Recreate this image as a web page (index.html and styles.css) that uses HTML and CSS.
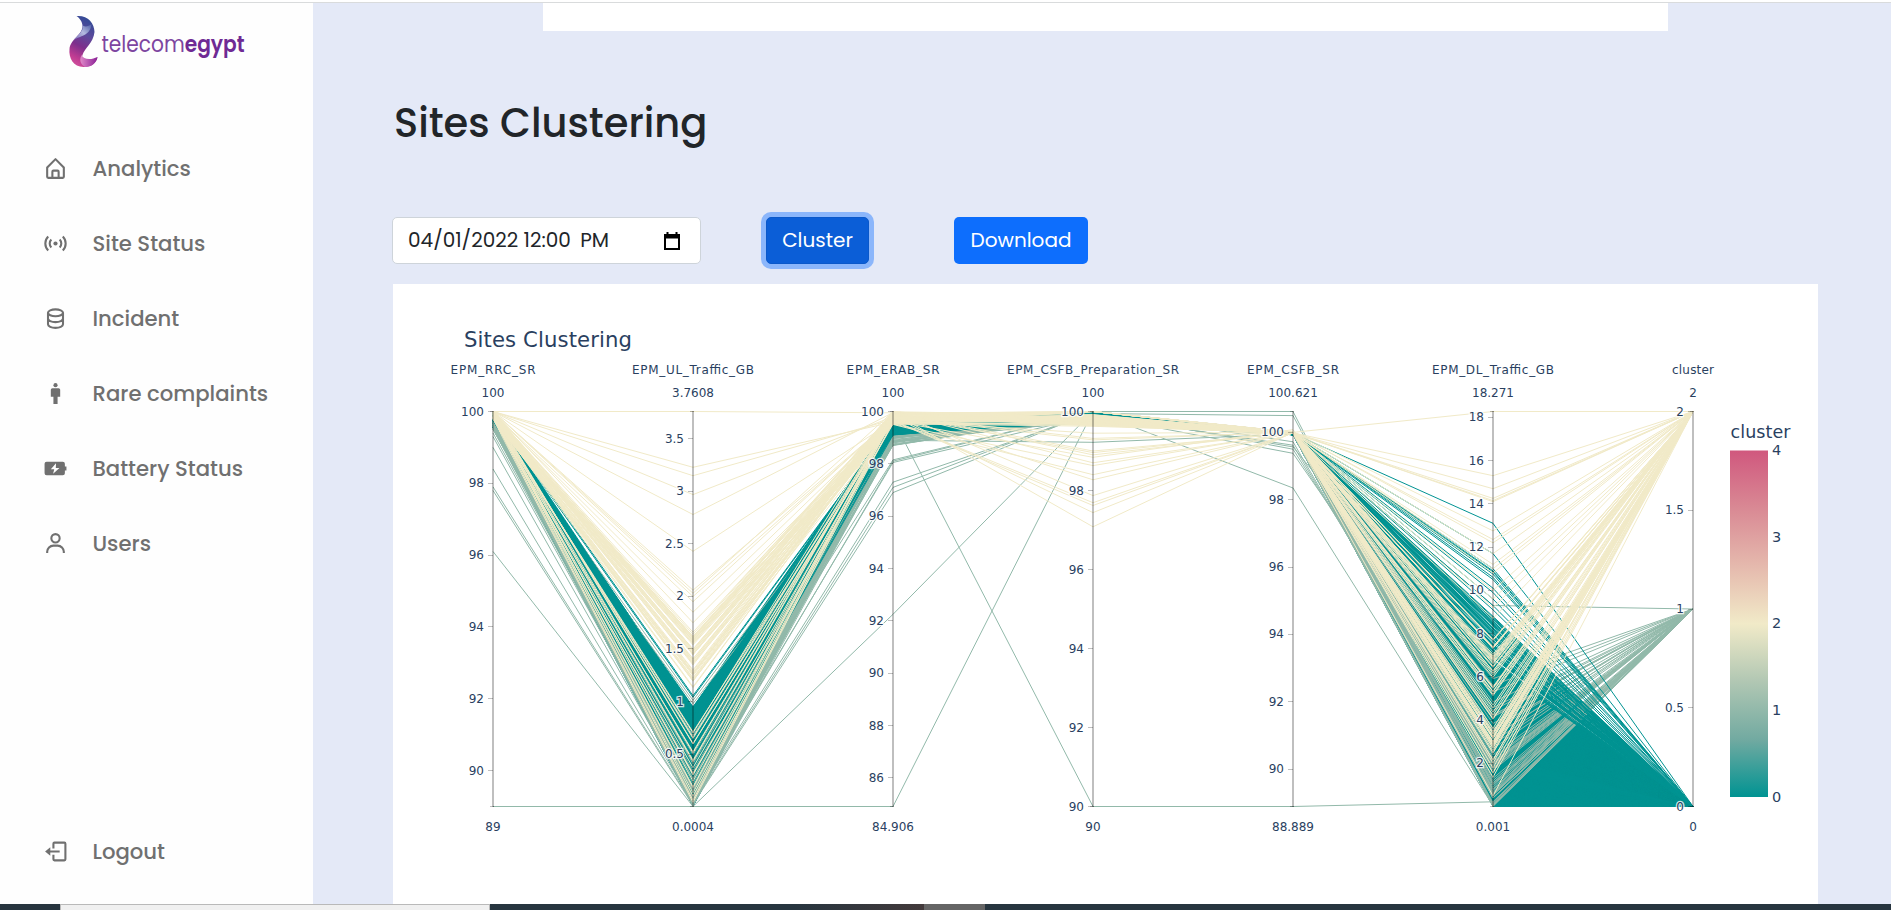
FILE: index.html
```
<!DOCTYPE html>
<html lang="en">
<head>
<meta charset="utf-8">
<title>Sites Clustering</title>
<link rel="stylesheet" href="styles.css">
</head>
<body>
<div class="topline"></div>
<div class="shell">
  <aside class="sidebar">
    <svg class="logo" width="180" height="60" viewBox="0 0 180 60">
      <defs>
        <linearGradient id="flame" x1="0.6" y1="0" x2="0.3" y2="1">
          <stop offset="0" stop-color="#2f4a95"/><stop offset="0.35" stop-color="#5d4a9c"/>
          <stop offset="0.6" stop-color="#7d2f8c"/><stop offset="0.85" stop-color="#c03c92"/><stop offset="1" stop-color="#d0509c"/>
        </linearGradient>
        <linearGradient id="tail" x1="0" y1="0" x2="1" y2="0">
          <stop offset="0" stop-color="#e08ac8"/><stop offset="1" stop-color="#8a1f96"/>
        </linearGradient>
        <linearGradient id="shine" x1="0" y1="1" x2="1" y2="0">
          <stop offset="0" stop-color="#7a68b4"/><stop offset="0.5" stop-color="#b4bbe0"/><stop offset="1" stop-color="#4a5aa4"/>
        </linearGradient>
      </defs>
      <g transform="translate(-1.5 0)">
        <path d="M14 3C25 2 32 10 32 19C31 30 22 35 20 42C18 48 21 51 26 50C30 50 33 47 35 44C34 50 29 54 21 54C11 54 6 45 7 36C8 26 20 22 20 13C20 9 17 5 14 3z" fill="url(#flame)"/>
        <path d="M20 12C22 18 15 22 11 27C17 23 28 23 29 11C26 14 21 14 20 12z" fill="url(#shine)"/>
        <path d="M19 42C21 47 29 47 35 44C34 50 29 54 23 54C19 52 16 48 19 42z" fill="url(#tail)"/>
      </g>
      <text class="logo-light" x="37.500" y="39" textLength="143" lengthAdjust="spacingAndGlyphs">telecom<tspan class="logo-bold">egypt</tspan></text>
    </svg>
    <nav class="menu">
      <a class="item"><svg class="icon" viewBox="0 0 24 24"><path d="M5 22h14a2 2 0 0 0 2-2v-9a1 1 0 0 0-.29-.71l-8-8a1 1 0 0 0-1.41 0l-8 8A1 1 0 0 0 3 11v9a2 2 0 0 0 2 2zm5-2v-5h4v5zm-5-8.59 7-7 7 7V20h-3v-5a2 2 0 0 0-2-2h-4a2 2 0 0 0-2 2v5H5z"/></svg><span>Analytics</span></a>
      <a class="item"><svg class="icon line" viewBox="0 0 24 24"><path d="M5 5.3a9.5 9.5 0 0 0 0 13.4M19 5.3a9.5 9.5 0 0 1 0 13.4M8 8.2a5.4 5.4 0 0 0 0 7.6M16 8.2a5.4 5.4 0 0 1 0 7.6"/><circle class="solid" cx="12" cy="12" r="2"/></svg><span>Site Status</span></a>
      <a class="item"><svg class="icon line" viewBox="0 0 24 24"><ellipse cx="12" cy="6.500" rx="7.200" ry="3.300"/><path d="M4.800 6.500v11c0 2 3.200 3.500 7.200 3.500s7.200-1.500 7.200-3.500v-11M4.800 12c0 2 3.200 3.500 7.200 3.500s7.200-1.500 7.200-3.500"/></svg><span>Incident</span></a>
      <a class="item"><svg class="icon" viewBox="0 0 24 24"><circle cx="12" cy="4" r="2"/><path d="M15 7H9a1.500 1.500 0 0 0-1.500 1.500V15H10v7h4v-7h2.500V8.500A1.500 1.500 0 0 0 15 7z"/></svg><span>Rare complaints</span></a>
      <a class="item"><svg class="icon" viewBox="0 0 24 24"><path fill-rule="evenodd" d="M3.500 5.500h15.500a2 2 0 0 1 2 2V10h1.500v4H21v2.500a2 2 0 0 1-2 2H3.500a2 2 0 0 1-2-2v-9a2 2 0 0 1 2-2zM12.500 7 7.500 12.600h3.300L9.700 17l6.100-5.600h-3.500z"/></svg><span>Battery Status</span></a>
      <a class="item"><svg class="icon" viewBox="0 0 24 24"><path d="M12 2a5 5 0 1 0 5 5 5 5 0 0 0-5-5zm0 8a3 3 0 1 1 3-3 3 3 0 0 1-3 3zm9 11v-1a7 7 0 0 0-7-7h-4a7 7 0 0 0-7 7v1h2v-1a5 5 0 0 1 5-5h4a5 5 0 0 1 5 5v1z"/></svg><span>Users</span></a>
    </nav>
    <a class="item logout"><svg class="icon" viewBox="0 0 24 24"><path d="m2 12 5 4v-3h9v-2H7V8z"/><path d="M20 2.500H11a2 2 0 0 0-2 2V9h2V4.500h9.500v15H11V15H9v4.500a2 2 0 0 0 2 2h9.500a2 2 0 0 0 2-2v-15a2 2 0 0 0-2-2z"/></svg><span>Logout</span></a>
  </aside>
  <main class="main">
    <div class="previous-panel"></div>
    <h1 class="heading">Sites Clustering</h1>
    <div class="controls">
      <div class="datetime"><span>04/01/2022 <span class="time">12:00</span> PM</span>
        <svg width="16" height="18" viewBox="0 0 16 18"><path fill-rule="evenodd" d="M2.500 0h2v2h7V0h2v2H16v16H0V2h2.500zM2 6.500V16h12V6.500z"/></svg>
      </div>
      <button class="btn active">Cluster</button>
      <button class="btn download">Download</button>
    </div>
    <section class="card"><svg id="chart" class="chart" width="1425" height="620" viewBox="393 284 1425 620"></svg></section>
  </main>
</div>
<footer class="taskbar"><div class="search"></div><div class="tint"></div><div class="task"></div></footer>
<script src="chart.js"></script>
</body>
</html>
```
FILE: styles.css
```
* { box-sizing: border-box; }
body {
  margin: 0;
  height: 910px;
  overflow: hidden;
  display: flex;
  flex-direction: column;
  background: #fff;
  font-family: Poppins, Inter, "Open Sans", sans-serif;
}
.topline { height: 3px; flex: none; border-bottom: 1px solid #d9dbdc; }
.shell { display: flex; height: 901px; flex: none; }
.sidebar {
  width: 313px;
  flex: none;
  background: #fefefe;
  display: flex;
  flex-direction: column;
}
.logo { margin: 10px 0 0 64px; flex: none; overflow: visible; }
.logo text { font-family: Poppins, Lato, sans-serif; font-size: 22.5px; }
.logo .logo-light { fill: #7d45a0; font-weight: 400; }
.logo .logo-bold { fill: #6f2a94; font-weight: 600; }
.menu { display: flex; flex-direction: column; gap: 15px; margin-top: 65px; }
.item {
  display: flex;
  align-items: center;
  height: 60px;
  padding-left: 42.5px;
  gap: 25px;
  color: #707070;
  font-size: 21.2px;
  font-weight: 500;
  white-space: nowrap;
}
.logout { margin-top: auto; margin-bottom: 23px; }
.icon { width: 25px; height: 25px; fill: #707070; flex: none; }
.icon.line { fill: none; stroke: #707070; stroke-width: 2; }
.icon .solid { fill: #707070; stroke: none; }
.main { flex: 1; background: #e4e9f7; display: flex; flex-direction: column; overflow: hidden; }
.previous-panel { width: 1125px; height: 28px; margin-left: 230px; background: #fff; flex: none; }
.heading {
  margin: 62px 0 0 81px;
  height: 60px;
  line-height: 60px;
  font-size: 40px;
  font-weight: 500;
  color: #212529;
  flex: none;
}
.controls { display: flex; margin: 64px 0 0 79px; height: 47px; flex: none; }
.datetime {
  width: 309px;
  border: 1px solid #ced4da;
  border-radius: 5px;
  background: #fff;
  display: flex;
  align-items: center;
  justify-content: space-between;
  padding: 0 20px 2px 15px;
  color: #212529;
  font-size: 20px;
  white-space: nowrap;
}
.datetime svg { margin-top: 2px; }
.time { margin-right: 4px; }
.btn {
  border: 0;
  border-radius: 5px;
  padding: 0 0 2px;
  font: 400 20px Poppins, Inter, "Open Sans", sans-serif;
  color: #fff;
  background: #0d6efd;
}
.active { width: 103px; margin-left: 65px; background: #0b5ed7; border: 1px solid #0a58ca; box-shadow: 0 0 0 5px #8bb6fb; }
.download { width: 134px; margin-left: 85px; }
.card { width: 1425px; height: 620px; margin: 20px 0 0 80px; background: #fff; flex: none; }
.chart { display: block; }
.chart text { font-family: Verdana, "DejaVu Sans", sans-serif; font-size: 12px; fill: #2a3f5f; }
.chart .chart-title { font-size: 21.2px; }
.chart .bar-title { font-size: 17.5px; }
.chart .bar-tick { font-size: 14.5px; }
.chart .tick { paint-order: stroke; stroke: #fff; stroke-width: 2.5px; stroke-opacity: 0.8; }
.taskbar { height: 6px; flex: none; display: flex; background: #27353f; padding-left: 60px; }
.search { width: 430px; background: #f0f0f0; border: 1px solid #b9b9b9; border-bottom: 0; }
.tint { width: 434px; background: linear-gradient(90deg, #27353f 70%, #433a3b); }
.task { width: 61px; background: #656565; }
```
FILE: chart.js
```
const NS = "http://www.w3.org/2000/svg";
const svg = document.getElementById("chart");
const TOP = 411.5, BOTTOM = 806.5;

function add(tag, attrs, text) {
  const el = document.createElementNS(NS, tag);
  for (const k in attrs) el.setAttribute(k, attrs[k]);
  if (text !== undefined) el.textContent = text;
  svg.appendChild(el);
  return el;
}

const dims = [
  { x: 493, name: "EPM_RRC_SR", w: 85, lo: 89, hi: 100, ticks: [100, 98, 96, 94, 92, 90] },
  { x: 693, name: "EPM_UL_Traffic_GB", w: 122, lo: 0.0004, hi: 3.7608, ticks: [3.5, 3, 2.5, 2, 1.5, 1, 0.5] },
  { x: 893, name: "EPM_ERAB_SR", w: 93, lo: 84.906, hi: 100, ticks: [100, 98, 96, 94, 92, 90, 88, 86] },
  { x: 1093, name: "EPM_CSFB_Preparation_SR", w: 172, lo: 90, hi: 100, ticks: [100, 98, 96, 94, 92, 90] },
  { x: 1293, name: "EPM_CSFB_SR", w: 92, lo: 88.889, hi: 100.621, ticks: [100, 98, 96, 94, 92, 90] },
  { x: 1493, name: "EPM_DL_Traffic_GB", w: 122, lo: 0.001, hi: 18.271, ticks: [18, 16, 14, 12, 10, 8, 6, 4, 2] },
  { x: 1693, name: "cluster", w: 42, lo: 0, hi: 2, ticks: [2, 1.5, 1, 0.5, 0] }
];
const yOf = (d, v) => BOTTOM - (v - d.lo) / (d.hi - d.lo) * (BOTTOM - TOP);

let seed = 7;
function rnd() {
  seed = (seed * 1664525 + 1013904223) % 4294967296;
  return seed / 4294967296;
}
const between = (a, b) => a + (b - a) * rnd();

const colors = ["#009392", "#92b9aa", "#f1eac8"];
const groups = [[], [], [], []];

/* cluster 0: low traffic, very dense */
for (let i = 0; i < 640; i++) {
  const dl = i < 40 ? between(6.3, 8.8) : 6.7 * (i - 40) / 600;
  const ul = i < 60 ? between(0.72, 0.95) : between(0, 0.78);
  groups[0].push([between(99.55, 99.98), ul, between(99.05, 99.7), between(99.72, 100), between(99.93, 100), dl, 0]);
}

/* cluster 1: degraded sites */
groups[1].push(
  [89, 0.0004, 84.906, 100, 100, 0.4, 1],
  [96.1, 0.0004, 92.25, 100, 100, 1.1, 1],
  [97.8, 0.01, 99.7, 90, 88.889, 0.22, 1],
  [97.9, 0.02, 96.9, 100, 98.35, 0.03, 1],
  [98.4, 0.03, 97.1, 100, 100.621, 0.4, 1],
  [99, 0.05, 97.3, 99.95, 100.5, 0.7, 1],
  [99.3, 0.07, 98.1, 100, 99.72, 0.9, 1],
  [99.4, 0.09, 98.05, 99.9, 99.62, 1.3, 1],
  [99.5, 0.3, 98.15, 100, 99.5, 2, 1],
  [99.6, 0.4, 98.9, 99.22, 99.95, 9.3, 1],
  [99.6, 0.1, 98.8, 99.9, 99.38, 3, 1],
  [99.5, 0.98, 98.7, 99.95, 99.57, 5.3, 1],
  [99.7, 1.01, 99.1, 99.95, 99.98, 5.6, 1]
);
for (let i = 0; i < 55; i++) {
  const k = rnd();
  groups[1].push([between(99.5, 99.9), 0.85 * k * rnd(), i < 12 ? between(98.7, 98.95) : between(98.95, 99.5), between(99.75, 100), between(99.94, 100), 6 * k * k, 1]);
}

/* cluster 0: busier sites */
const busyDl = [13.1, 11.7, 11, 10.9, 10.85, 10.75, 10.6, 10.5, 10.1, 9.9, 9.6, 9.3, 9.1, 8.8, 8.75, 8.7];
for (let i = 0; i < 62; i++) {
  const ul = i < 2 ? 1.04 + 0.015 * i : i < 40 ? between(0.77, 0.91) : between(0.1, 0.75);
  groups[2].push([between(99.75, 99.98), ul, between(99.1, 99.6), between(99.72, 100), between(99.95, 100), i < busyDl.length ? busyDl[i] : between(6.4, 8.7), 0]);
}

/* cluster 2: high traffic */
const heavyUl = [3.7608, 3.23, 3.15, 2.97, 2.78, 2.43, 2.06, 2.03, 2, 1.95, 1.85, 1.75, 1.66, 1.64, 1.62];
const lightUl = [0.71, 0.7, 0.66, 0.65, 0.6, 0.595, 0.52, 0.51, 0.44, 0.43, 0.37, 0.31, 0.3, 0.24, 0.19, 0.18, 0.13, 0.1, 0.06, 0.04];
const heavyDl = [18.271, 15.3, 14.7, 14.25, 14.15, 14.1, 12.75, 12.35, 12.2, 11.7, 11.2, 11, 10.8, 10, 9.6, 9.2, 8.7];
const lowPrep = [97.08, 97.44, 97.62, 97.69, 97.87, 98.27, 98.4, 98.63, 98.7, 98.84, 98.9, 98.96, 99, 99.28, 99.32, 99.45];
const total = 85;
for (let i = 0; i < total; i++) {
  const p = (i * 37) % total;
  const ul = i < heavyUl.length ? heavyUl[i] : i < total - lightUl.length ? between(1.12, 1.62) : lightUl[i - total + lightUl.length];
  const dl = i < heavyDl.length ? heavyDl[i] : (i % 4 === 0 ? between(4, 8) : i % 3 === 0 ? between(2, 3.4) : between(0.2, 7.6));
  const prep = p < lowPrep.length ? lowPrep[p] : (p < 30 ? 100 : between(99.62, 99.92));
  groups[3].push([i < 9 ? 100 : between(99.78, 100), ul, i === 0 ? 99.95 : i < 4 ? 99.5 + i * 0.1 : between(99.5, 100), prep, p === 9 ? 100.08 : between(99.97, 100.01), dl, 2]);
}

groups.forEach(group => {
  group.forEach(v => {
    add("polyline", {
      points: v.map((n, i) => dims[i].x + "," + yOf(dims[i], n).toFixed(1)).join(" "),
      fill: "none", stroke: colors[v[6]], "stroke-width": 1
    });
  });
});

dims.forEach(d => {
  add("rect", { x: d.x - 1, y: 411, width: 2, height: 396, fill: "#000", "fill-opacity": 0.25 });
  [TOP, BOTTOM].forEach(y => add("rect", { x: d.x - 3, y: Math.floor(y), width: 4, height: 1, fill: "#000", "fill-opacity": 0.25 }));
  add("text", { x: d.x, y: 374, "text-anchor": "middle", textLength: d.w }, d.name);
  add("text", { x: d.x, y: 397, "text-anchor": "middle" }, d.hi);
  add("text", { x: d.x, y: 831, "text-anchor": "middle" }, d.lo);
  d.ticks.forEach(t => {
    const y = yOf(d, t);
    add("rect", { x: d.x - 5, y: Math.floor(y), width: 5, height: 1, fill: "#000", "fill-opacity": 0.25 });
    add("text", { class: "tick", x: d.x - 9, y: y + 4, "text-anchor": "end" }, t);
  });
});

add("text", { class: "chart-title", x: 464, y: 346.500, textLength: 168 }, "Sites Clustering");

const defs = add("defs", {});
const grad = document.createElementNS(NS, "linearGradient");
grad.id = "tealrose";
grad.setAttribute("x1", 0); grad.setAttribute("x2", 0);
grad.setAttribute("y1", 1); grad.setAttribute("y2", 0);
["#009392", "#72aaa1", "#b1c7b3", "#f1eac8", "#e5b9ad", "#d98994", "#d0587e"].forEach((c, i) => {
  const s = document.createElementNS(NS, "stop");
  s.setAttribute("offset", i / 6);
  s.setAttribute("stop-color", c);
  grad.appendChild(s);
});
defs.appendChild(grad);
add("rect", { x: 1730, y: 450.500, width: 38, height: 346.500, fill: "url(#tealrose)" });
add("text", { class: "bar-title", x: 1730.500, y: 438, textLength: 60 }, "cluster");
[4, 3, 2, 1, 0].forEach((n, i) => {
  add("text", { class: "bar-tick", x: 1772, y: 455 + i * 86.700 }, n);
});
```
